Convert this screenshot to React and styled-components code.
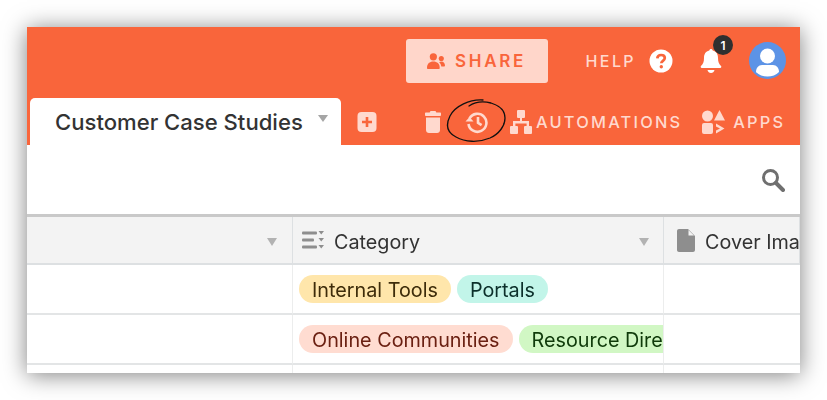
import styled, { createGlobalStyle } from "styled-components";

const Global = createGlobalStyle`
    *, *::before, *::after {
        box-sizing: border-box;
    }
    html, body {
        margin: 0;
        background: #fff;
    }
    body {
        font-family: Inter, "Liberation Sans", sans-serif;
    }
`;
const Page = styled.div`
    width: 827px;
    height: 400px;
    padding: 27px;
    overflow: hidden;
`;
const Win = styled.div`
    width: 773px;
    height: 346px;
    overflow: hidden;
    background: #fff;
    box-shadow: 0 2px 22px rgba(0, 0, 0, 0.5);
    filter: blur(0.35px);
`;
const Header = styled.div`
    height: 118px;
    background: #f9653b;
    display: flex;
    flex-direction: column;
`;
const TopRow = styled.div`
    height: 71px;
    padding: 12px 14px 0 0;
    display: flex;
    justify-content: flex-end;
    align-items: flex-start;
`;
const Share = styled.div`
    width: 142px;
    height: 44px;
    background: #ffd6ca;
    border-radius: 3px;
    color: #f9653b;
    font-size: 17px;
    font-weight: 600;
    letter-spacing: 2.7px;
    display: flex;
    align-items: center;
    justify-content: center;
    gap: 10px;
    margin-right: 38px;
`;
const Help = styled.span`
    color: #ffd9ce;
    font-size: 16px;
    font-weight: 500;
    letter-spacing: 2.4px;
    line-height: 44px;
    margin-right: 13px;
`;
const HelpIcon = styled.svg`
    width: 24px;
    height: 24px;
    margin: 10px 26px 0 0;
`;
const BellWrap = styled.div`
    position: relative;
    width: 24px;
    height: 28px;
    margin: 8px 26px 0 0;
`;
const Badge = styled.span`
    position: absolute;
    left: 14px;
    top: -12px;
    width: 20px;
    height: 20px;
    border-radius: 50%;
    background: #2f2f2f;
    color: #fff;
    font-size: 12px;
    font-weight: 600;
    display: flex;
    align-items: center;
    justify-content: center;
`;
const Avatar = styled.svg`
    width: 37px;
    height: 37px;
    margin-top: 3px;
`;
const TabRow = styled.div`
    position: relative;
    height: 47px;
    padding: 0 14px 0 3px;
    display: flex;
    align-items: flex-end;
`;
const Tab = styled.div`
    width: 311px;
    height: 47px;
    padding: 0 13px 0 25px;
    background: #fff;
    border-radius: 5px 5px 0 0;
    display: flex;
    align-items: center;
    justify-content: space-between;
    color: #333;
    font-size: 22.1px;
    font-weight: 500;
`;
const TabArrow = styled.i`
    width: 0;
    height: 0;
    margin-bottom: 7px;
    border-left: 5.5px solid transparent;
    border-right: 5.5px solid transparent;
    border-top: 7px solid #a5a5a5;
`;
const Tools = styled.div`
    flex: 1;
    height: 47px;
    display: flex;
    align-items: center;
`;
const ToolIcon = styled.svg`
    flex: none;
    width: ${(p) => p.$w}px;
    height: 24px;
    margin-left: ${(p) => p.$ml}px;
`;
const ToolLabel = styled.span`
    color: #ffd9ce;
    font-size: 16.4px;
    font-weight: 500;
    letter-spacing: 2.2px;
    margin-left: ${(p) => p.$ml}px;
    white-space: nowrap;
`;
const Scribble = styled.svg`
    position: absolute;
    left: 415px;
    top: 0;
    width: 70px;
    height: 50px;
    overflow: visible;
`;
const SearchBar = styled.div`
    height: 69px;
    padding: 23px 15px 0 0;
    display: flex;
    justify-content: flex-end;
`;
const SearchIcon = styled.svg`
    width: 24px;
    height: 24px;
`;
const Table = styled.div`
    border-top: 3px solid #c9c9c9;
    display: grid;
    grid-template-columns: 266px 371px 136px;
`;
const HeadCell = styled.div`
    height: 48px;
    background: #f3f3f3;
    border-right: 1px solid #dde0e2;
    border-bottom: 2px solid #dde0e2;
    display: flex;
    align-items: center;
    padding: 0 ${(p) => p.$pr || 0}px 0 ${(p) => p.$pl || 0}px;
    color: #333;
    font-size: 19.8px;
    white-space: nowrap;
    overflow: hidden;
    &:last-of-type {
        border-right: 0;
    }
`;
const HeadLabel = styled.span`
    padding-top: 4px;
`;
const HeadArrow = styled.i`
    margin-left: auto;
    margin-top: 3px;
    width: 0;
    height: 0;
    border-left: 5.5px solid transparent;
    border-right: 5.5px solid transparent;
    border-top: 8px solid #b2b2b2;
`;
const HeadIcon = styled.svg`
    flex: none;
    margin-right: ${(p) => p.$mr}px;
`;
const Cell = styled.div`
    height: ${(p) => p.$h || 48}px;
    border-right: 1px solid #eceded;
    border-bottom: ${(p) => (p.$open ? 0 : "2px solid #e3e5e6")};
    display: flex;
    align-items: center;
    gap: 6px;
    padding-left: 6px;
    overflow: hidden;
`;
const LastCell = styled(Cell)`
    border-right: 0;
`;
const Pill = styled.span`
    flex: none;
    height: 28px;
    padding: 0 13px;
    border-radius: 14px;
    background: ${(p) => p.$bg};
    color: ${(p) => p.$fg};
    font-size: 19.8px;
    line-height: 30px;
    white-space: nowrap;
`;

const rows = [
    [
        { label: "Internal Tools", bg: "#ffe6ab", fg: "#3e2c0a" },
        { label: "Portals", bg: "#c2f5e9", fg: "#0b2f2a" },
    ],
    [
        { label: "Online Communities", bg: "#ffdcd1", fg: "#6b2012" },
        { label: "Resource Directories", bg: "#d1f7c4", fg: "#0f3a0a" },
    ],
];

function Row({ pills }) {
    return (
        <>
            <Cell $h={50} />
            <Cell $h={50}>
                {pills.map((p) => (
                    <Pill key={p.label} $bg={p.bg} $fg={p.fg}>
                        {p.label}
                    </Pill>
                ))}
            </Cell>
            <LastCell $h={50} />
        </>
    );
}

function App() {
    return (
        <Page>
            <Global />
            <Win>
                <Header>
                    <TopRow>
                        <Share>
                            <svg width="18" height="16" viewBox="0 0 17 15" fill="#f9653b">
                                <circle cx="6" cy="3.6" r="3.4" />
                                <path d="M0 14c0-4 2.5-6 6-6s6 2 6 6c0 .6-.4 1-1 1H1c-.6 0-1-.4-1-1z" />
                                <circle cx="13.5" cy="5.2" r="2.4" />
                                <path d="M11.5 8.6c.6-.4 1.3-.6 2-.6 2.2 0 3.5 1.6 3.5 4 0 .5-.3.8-.8.8h-2.7c-.1-1.7-.8-3.1-2-4.2z" />
                            </svg>
                            SHARE
                        </Share>
                        <Help>HELP</Help>
                        <HelpIcon viewBox="0 0 24 24">
                            <circle cx="12" cy="12" r="11.5" fill="#fff" />
                            <path d="M8.3 9.3c.2-2.2 1.8-3.3 3.8-3.3 2.2 0 3.700 1.300 3.700 3.100 0 2.700-3.500 2.800-3.500 5.100" fill="none" stroke="#f9653b" strokeWidth="2.7" />
                            <circle cx="12.3" cy="17.8" r="1.7" fill="#f9653b" />
                        </HelpIcon>
                        <BellWrap>
                            <svg width="24" height="28" viewBox="0 0 24 28" fill="#fff">
                                <path d="M12 2c1 0 1.600.6 1.700 1.500 3.700.8 5.300 3.700 5.300 7.500 0 4 1 6 3 8 .7.700.3 2-.8 2H2.800c-1.100 0-1.500-1.300-.8-2 2-2 3-4 3-8 0-3.800 1.600-6.700 5.300-7.500C10.400 2.600 11 2 12 2z" />
                                <path d="M8.500 23h7c-.4 1.800-1.800 3-3.500 3s-3.100-1.200-3.500-3z" />
                            </svg>
                            <Badge>1</Badge>
                        </BellWrap>
                        <Avatar viewBox="0 0 37 37">
                            <defs>
                                <clipPath id="avatar-clip">
                                    <circle cx="18.5" cy="18.5" r="18.5" />
                                </clipPath>
                            </defs>
                            <circle cx="18.5" cy="18.5" r="18.5" fill="#5c93e6" />
                            <g clipPath="url(#avatar-clip)" fill="#fff">
                                <circle cx="18.5" cy="14" r="7.5" />
                                <path d="M7 30c0-4 2.500-7 6-7h11c3.500 0 6 3 6 7-3 3-7 4.500-11.500 4.500S10 33 7 30z" />
                            </g>
                        </Avatar>
                    </TopRow>
                    <TabRow>
                        <Tab>
                            Customer Case Studies
                            <TabArrow />
                        </Tab>
                        <Tools>
                            <ToolIcon $w={20} $ml={16} viewBox="0 0 20 24">
                                <rect x="0.5" y="2" width="19" height="20" rx="4" fill="#ffd9ce" />
                                <path d="M10 7v10M5 12h10" stroke="#f9653b" strokeWidth="2.6" />
                            </ToolIcon>
                            <ToolIcon $w={16} $ml={48} viewBox="0 0 16 24" fill="#ffd9ce">
                                <path d="M5.500 1h5l.8 1.500H15c.6 0 1 .4 1 1V5c0 .5-.4 1-1 1H1c-.6 0-1-.5-1-1V3.500c0-.6.4-1 1-1h3.700z" />
                                <path d="M1 7.500h14V20c0 1.700-1.300 3-3 3H4c-1.700 0-3-1.300-3-3z" />
                            </ToolIcon>
                            <ToolIcon $w={24} $ml={24} viewBox="0 0 24 24" fill="none">
                                <path d="M4.500 8.500A9 9 0 1 1 3.500 14" stroke="#ffd9ce" strokeWidth="2.6" />
                                <path d="M0.500 11.500h8l-4-4.500z" fill="#ffd9ce" />
                                <path d="M13 7v5.800l3.600 2.400" stroke="#ffd9ce" strokeWidth="2.6" />
                            </ToolIcon>
                            <ToolIcon $w={22} $ml={21} viewBox="0 0 22 24" fill="#ffd9ce">
                                <rect x="7" y="0" width="8" height="8" rx="1" />
                                <rect x="0" y="16" width="8" height="8" rx="1" />
                                <rect x="14" y="16" width="8" height="8" rx="1" />
                                <path d="M10 7h2v4h7v6h-2.400v-3.600h-11.200V17H3v-6h7z" />
                            </ToolIcon>
                            <ToolLabel $ml={4}>AUTOMATIONS</ToolLabel>
                            <ToolIcon $w={23} $ml={20} viewBox="0 0 23 24" fill="#ffd9ce">
                                <circle cx="5.500" cy="6" r="5.500" />
                                <path d="M17.500 0l5.500 10.500H12z" />
                                <rect x="0" y="13" width="11" height="11" rx="2" />
                                <path d="M14 13.500l8.500 5-8.500 5v-3l4-2-4-2z" />
                            </ToolIcon>
                            <ToolLabel $ml={8}>APPS</ToolLabel>
                        </Tools>
                        <Scribble viewBox="0 0 70 50" fill="none">
                            <path
                                d="M41 2C28 1 13 8 8 18 3 28 6 35 14 39c9 5 22 6 34 1 9-4 15-12 15-20 0-7-4-12-14-15-8-2-16-1-22 3"
                                stroke="#111"
                                strokeWidth="1.3"
                                strokeLinecap="round"
                            />
                        </Scribble>
                    </TabRow>
                </Header>
                <SearchBar>
                    <SearchIcon viewBox="0 0 24 24" fill="none" stroke="#6f6f6f">
                        <circle cx="9.5" cy="9.5" r="7" strokeWidth="3" />
                        <path d="M15 15l7 7" strokeWidth="4" strokeLinecap="round" />
                    </SearchIcon>
                </SearchBar>
                <Table>
                    <HeadCell $pr={15}>
                        <HeadArrow />
                    </HeadCell>
                    <HeadCell $pl={9} $pr={14}>
                        <HeadIcon $mr={10} width="22" height="20" viewBox="0 0 22 20" fill="#8e8e8e">
                            <rect x="0" y="1.500" width="15" height="3" rx="1" />
                            <rect x="0" y="8.500" width="12" height="3" rx="1" />
                            <rect x="0" y="15.500" width="15" height="3" rx="1" />
                            <path d="M16.500 1h5.500l-2.750 3.500zM16.500 8h5.500l-2.750 3.500zM16.500 15h5.500l-2.750 3.500z" />
                        </HeadIcon>
                        <HeadLabel>Category</HeadLabel>
                        <HeadArrow />
                    </HeadCell>
                    <HeadCell $pl={13}>
                        <HeadIcon $mr={10} width="18" height="23" viewBox="0 0 18 23" fill="#8e8e8e">
                            <path d="M2 0h9l7 7v14c0 1.100-.9 2-2 2H2c-1.100 0-2-.9-2-2V2C0 .9.900 0 2 0z" />
                            <path d="M11.500 1v5.500H17z" fill="#f3f3f3" />
                        </HeadIcon>
                        <HeadLabel>Cover Image</HeadLabel>
                    </HeadCell>
                    {rows.map((pills, i) => (
                        <Row key={i} pills={pills} />
                    ))}
                    <Cell $h={8} $open />
                    <Cell $h={8} $open />
                    <LastCell $h={8} $open />
                </Table>
            </Win>
        </Page>
    );
}

export default App;
